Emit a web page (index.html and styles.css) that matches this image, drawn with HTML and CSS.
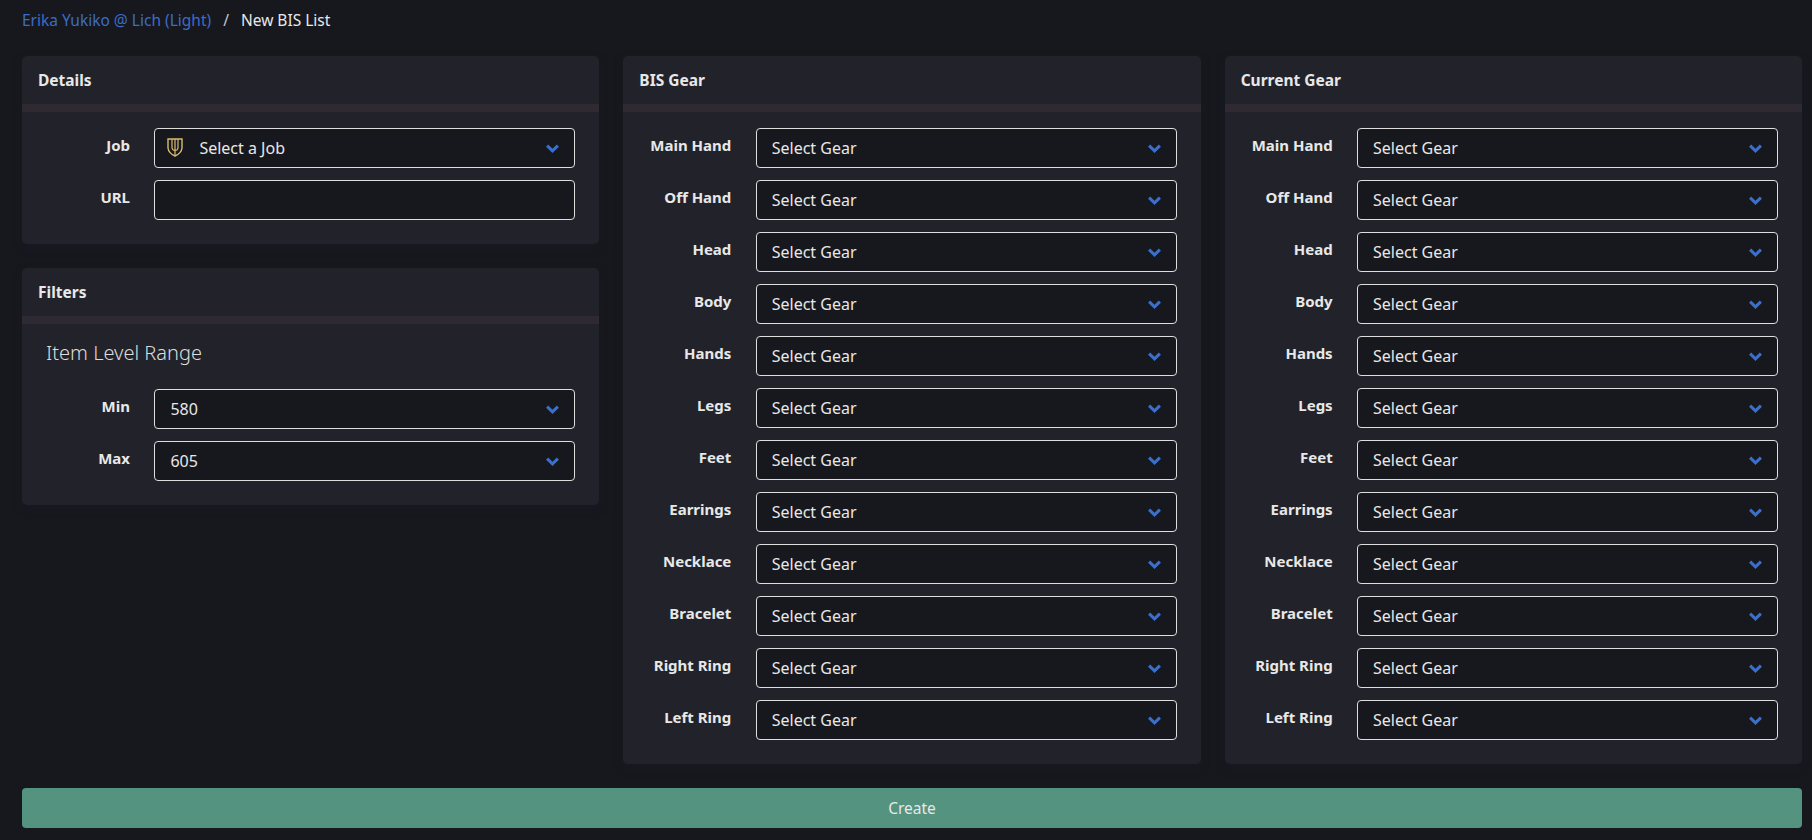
FILE: index.html
```html
<!DOCTYPE html>
<html lang="en">
<head>
  <meta charset="UTF-8" />
  <title>New BIS List</title>
  <link rel="stylesheet" href="styles.css">
</head>
<body>

  <svg class="icon-defs" width="0" height="0">
    <symbol id="chevron" viewBox="0 0 13 9">
      <path d="M1.1 1.6 L6.5 6.9 L11.9 1.6" fill="none" stroke="currentColor" stroke-width="3" />
    </symbol>
  </svg>

  <nav class="breadcrumb">
    <a href="#">Erika Yukiko @ Lich (Light)</a>
    <span class="sep">/</span>
    <span>New BIS List</span>
  </nav>

  <main class="columns">
    <div class="stack">
      <section class="card">
        <h2 class="card-title">Details</h2>
        <div class="card-body">
          <div class="row">
            <label>Job</label>
            <div class="select has-icon">
              <svg class="job-icon" viewBox="0 0 16 19" width="16" height="19">
                <path d="M1 1 L15 1 L15 10 Q14.5 15 8 18 Q1.5 15 1 10 Z" fill="none" stroke="#d8bb6e" stroke-width="1.4" />
                <path d="M5 1 L5 10 Q5.5 12.5 8 12.5 Q10.5 12.5 11 10 L11 1 M8 1 L8 17" fill="none" stroke="#d8bb6e" stroke-width="1.2" />
              </svg>
              <select><option>Select a Job</option></select>
              <svg class="chevron"><use href="#chevron" /></svg>
            </div>
          </div>
          <div class="row">
            <label>URL</label>
            <input type="text">
          </div>
        </div>
      </section>

      <section class="card">
        <h2 class="card-title">Filters</h2>
        <div class="card-body">
          <h3 class="subtitle">Item Level Range</h3>
          <div class="row">
            <label>Min</label>
            <div class="select"><select><option>580</option></select><svg class="chevron"><use href="#chevron" /></svg></div>
          </div>
          <div class="row">
            <label>Max</label>
            <div class="select"><select><option>605</option></select><svg class="chevron"><use href="#chevron" /></svg></div>
          </div>
        </div>
      </section>
    </div>

    <section class="card">
      <h2 class="card-title">BIS Gear</h2>
      <div class="card-body gear" data-slots></div>
    </section>

    <section class="card">
      <h2 class="card-title">Current Gear</h2>
      <div class="card-body gear" data-slots></div>
    </section>
  </main>

  <button class="create">Create</button>

  <script>
    const slots = ['Main Hand', 'Off Hand', 'Head', 'Body', 'Hands', 'Legs', 'Feet', 'Earrings', 'Necklace', 'Bracelet', 'Right Ring', 'Left Ring'];

    document.querySelectorAll('[data-slots]').forEach(list => {
      list.innerHTML = slots.map(slot => `
        <div class="row">
          <label>${slot}</label>
          <div class="select"><select><option>Select Gear</option></select><svg class="chevron"><use href="#chevron" /></svg></div>
        </div>`).join('');
    });
  </script>

</body>
</html>
```

FILE: styles.css
```css
* {
  box-sizing: border-box;
}

body {
  font-family: "Noto Sans", sans-serif;
  font-size: 16px;
  margin: 0;
  padding: 0 10px 12px 22px;
  background-color: #17181d;
  color: #e8e8e8;
}

.icon-defs {
  display: block;
}

.breadcrumb {
  display: flex;
  align-items: center;
  gap: 12px;
  height: 40px;
  font-size: 15.5px;
}

.breadcrumb a {
  color: #3b6cc7;
  text-decoration: none;
}

.breadcrumb .sep {
  color: #c8c8c8;
}

.columns {
  display: grid;
  grid-template-columns: repeat(3, 1fr);
  gap: 24px;
  margin-top: 16px;
  align-items: start;
}

.stack {
  display: flex;
  flex-direction: column;
  gap: 24px;
}

.card {
  background-color: #22232a;
  border-radius: 5px;
  box-shadow: 0 4px 10px rgba(20, 28, 50, 0.35);
}

.card-title {
  margin: 0;
  height: 56px;
  padding: 0 16px;
  display: flex;
  align-items: center;
  font-size: 15.5px;
  font-weight: 700;
  border-bottom: 8px solid #2f2932;
}

.card-body {
  display: flex;
  flex-direction: column;
  gap: 12px;
  padding: 16px 24px 24px 0;
}

.row {
  display: grid;
  grid-template-columns: 108px 1fr;
  gap: 24.4px;
}

.row label {
  text-align: right;
  font-weight: 700;
  font-size: 15px;
  line-height: 35px;
}

.subtitle {
  margin: 0 0 11px 24px;
  font-size: 20px;
  font-weight: 300;
  line-height: 26px;
  color: #dcdcdc;
}

.select {
  position: relative;
}

select, input {
  display: block;
  width: 100%;
  height: 40px;
  padding: 0 40px 0 15px;
  font-family: inherit;
  font-size: 16px;
  color: #e8e8e8;
  background-color: #17181d;
  border: 1px solid #dedede;
  border-radius: 4px;
  appearance: none;
}

.has-icon select {
  padding-left: 44px;
}

.chevron {
  position: absolute;
  top: 16px;
  right: 16px;
  width: 13px;
  height: 9px;
  color: #3a6fcb;
  pointer-events: none;
}

.job-icon {
  position: absolute;
  top: 10px;
  left: 13px;
}

.create {
  display: block;
  width: 100%;
  height: 40px;
  margin-top: 24px;
  font-family: inherit;
  font-size: 15.5px;
  color: #e8e8e8;
  background-color: #54937f;
  border: none;
  border-radius: 4px;
}
```
